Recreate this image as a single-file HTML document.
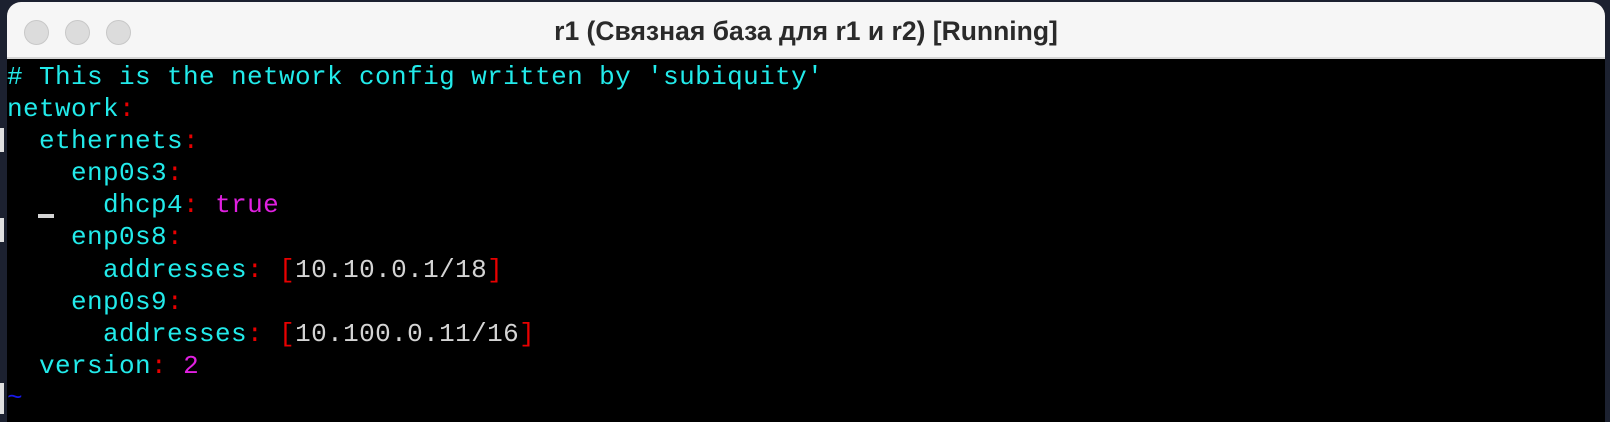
<!DOCTYPE html>
<html><head><meta charset="utf-8"><style>
html,body{margin:0;padding:0;width:1610px;height:414px;overflow:hidden;background:#1c2130;}
.win{position:absolute;left:7px;top:2px;width:1598px;height:420px;background:#000;border-radius:14px 14px 0 0;overflow:hidden;}
.tb{position:absolute;left:0;top:0;width:100%;height:55px;background:#f6f6f6;border-bottom:2px solid #d4d4d4;}
.dot{position:absolute;top:18px;width:25px;height:25px;border-radius:50%;background:#dcdcdc;border:1px solid #c8c8c8;box-sizing:border-box;}
.title{position:absolute;left:0;right:0;top:14px;text-align:center;font:bold 26.5px "Liberation Sans","Noto Sans CJK SC",sans-serif;color:#2a2a2a;}
pre{position:absolute;left:0;top:59px;margin:0;font:26px/32.1px "Liberation Mono",monospace;letter-spacing:0.4px;color:#22eaea;}
.r{color:#e80000}.m{color:#e020e0}.w{color:#d4d4d4}.b{color:#1818e8}
.side{position:absolute;left:0;width:4px;background:#e0e0e0;}
</style></head><body>
<div class="side" style="top:128px;height:24px"></div>
<div class="side" style="top:218px;height:24px"></div>
<div class="side" style="top:383px;height:31px"></div>
<div class="win">
<div class="tb">
<div class="dot" style="left:17px"></div><div class="dot" style="left:58px"></div><div class="dot" style="left:99px"></div>
<div class="title">r1 (Связная база для r1 и r2) [Running]</div>
</div>
<pre># This is the network config written by 'subiquity'
network<span class="r">:</span>
  ethernets<span class="r">:</span>
    enp0s3<span class="r">:</span>
      dhcp4<span class="r">:</span> <span class="m">true</span>
    enp0s8<span class="r">:</span>
      addresses<span class="r">:</span> <span class="r">[</span><span class="w">10.10.0.1/18</span><span class="r">]</span>
    enp0s9<span class="r">:</span>
      addresses<span class="r">:</span> <span class="r">[</span><span class="w">10.100.0.11/16</span><span class="r">]</span>
  version<span class="r">:</span> <span class="m">2</span>
<span class="b">~</span></pre>
<div style="position:absolute;left:31px;top:212px;width:16px;height:4px;background:#d4d4d4"></div>
</div>
</body></html>
